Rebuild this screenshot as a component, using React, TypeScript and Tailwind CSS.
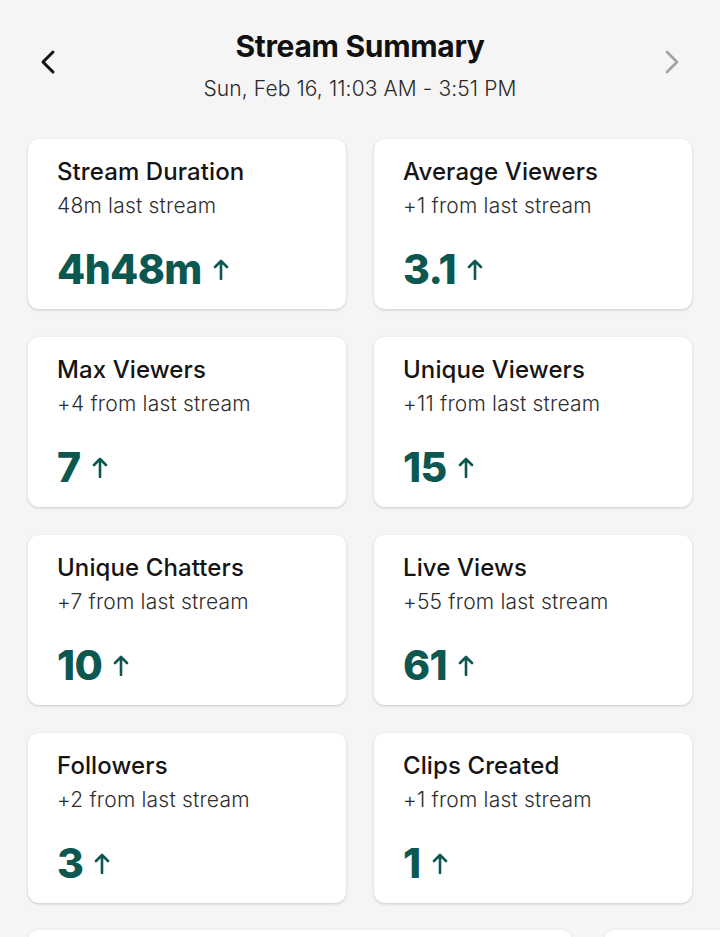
import React from "react";

const cards = [
  { title: "Stream Duration", sub: "48m last stream", value: "4h48m" },
  { title: "Average Viewers", sub: "+1 from last stream", value: "3.1" },
  { title: "Max Viewers", sub: "+4 from last stream", value: "7" },
  { title: "Unique Viewers", sub: "+11 from last stream", value: "15" },
  { title: "Unique Chatters", sub: "+7 from last stream", value: "10" },
  { title: "Live Views", sub: "+55 from last stream", value: "61" },
  { title: "Followers", sub: "+2 from last stream", value: "3" },
  { title: "Clips Created", sub: "+1 from last stream", value: "1" },
];

function Arrow() {
  return (
    <svg width="16" height="22" viewBox="0 0 16 22" className="ml-[11px]">
      <path d="M8 21V3M2 9L8 3L14 9" fill="none" stroke="#0d5751" strokeWidth="2.6" strokeLinecap="round" strokeLinejoin="round" />
    </svg>
  );
}

function Card({ title, sub, value }: { title: string; sub: string; value: string }) {
  return (
    <div className="h-[170px] rounded-[11px] bg-white shadow-[0_1px_3px_rgba(0,0,0,0.18)] pt-[18px] px-[29px]">
      <div className="text-[24px] leading-[30px] font-medium text-[#151515] tracking-[0.1px]">{title}</div>
      <div className="mt-[6px] text-[21px] leading-[26px] font-light text-[#2e2e2e] tracking-[0.2px]">{sub}</div>
      <div className="mt-[25px] flex items-center h-[50px]">
        <span className="text-[41px] leading-[50px] font-extrabold text-[#0d5751] tracking-[-0.6px]">{value}</span>
        <Arrow />
      </div>
    </div>
  );
}

export default function App() {
  return (
    <div className="w-[720px] h-[937px] overflow-hidden bg-[#f5f5f5]" style={{ fontFamily: "Inter, 'Noto Sans', sans-serif" }}>
      <div className="relative pt-[27px] flex flex-col items-center">
        <div className="text-[30px] leading-[38px] font-bold text-[#111] tracking-[-0.3px]">Stream Summary</div>
        <div className="mt-[10px] text-[21px] leading-[28px] font-light text-[#2a2a2a] tracking-[0.1px]">Sun, Feb 16, 11:03 AM - 3:51 PM</div>
        <svg className="absolute left-[38px] top-[48px]" width="20" height="28" viewBox="0 0 20 28">
          <path d="M15 4L5 14L15 24" fill="none" stroke="#111" strokeWidth="3" strokeLinecap="round" strokeLinejoin="round" />
        </svg>
        <svg className="absolute left-[662px] top-[48px]" width="20" height="28" viewBox="0 0 20 28">
          <path d="M5 4L15 14L5 24" fill="none" stroke="#a3a3a3" strokeWidth="2.6" strokeLinecap="round" strokeLinejoin="round" />
        </svg>
      </div>
      <div className="mt-[36px] px-[28px] grid grid-cols-2 gap-x-[28px] gap-y-[28px]">
        {cards.map((c) => (
          <Card key={c.title} {...c} />
        ))}
      </div>
      <div className="mt-[27px] flex gap-[32px] pl-[28px]">
        <div className="w-[544px] h-[60px] shrink-0 rounded-[11px] bg-white shadow-[0_1px_3px_rgba(0,0,0,0.12)]" />
        <div className="w-[200px] h-[60px] shrink-0 rounded-[11px] bg-white shadow-[0_1px_3px_rgba(0,0,0,0.12)]" />
      </div>
    </div>
  );
}
